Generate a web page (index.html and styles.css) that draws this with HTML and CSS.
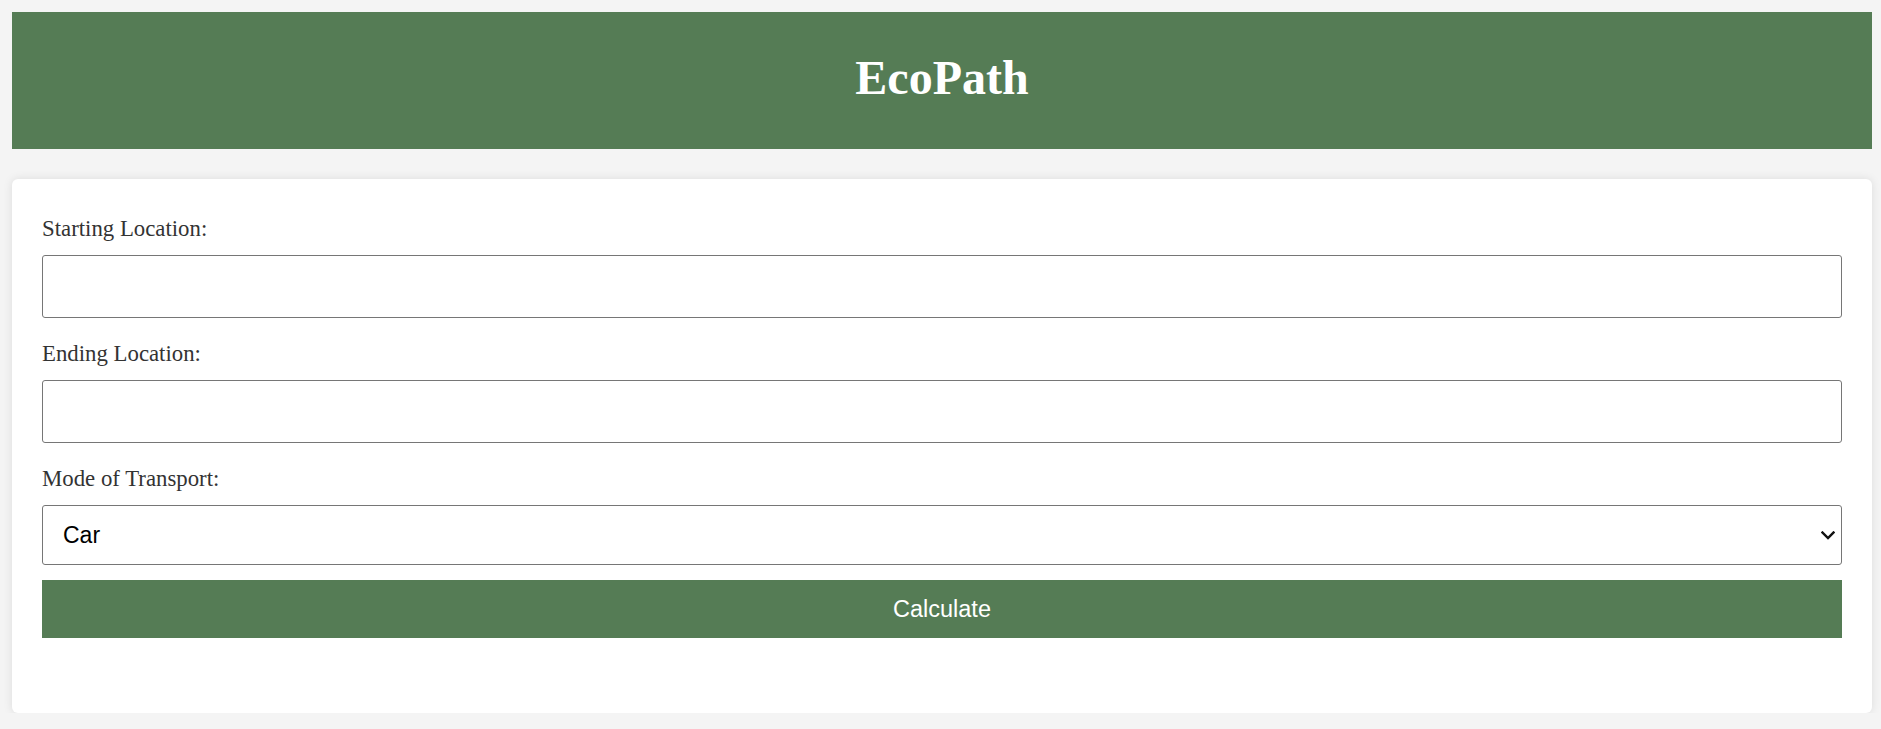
FILE: index.html
```html
<!DOCTYPE html>
<html lang="en">
<head>
<meta charset="utf-8">
<title>EcoPath</title>
<link rel="stylesheet" href="styles.css">
</head>
<body>
<header class="site-header">
  <h1 class="site-title">EcoPath</h1>
</header>
<main class="card">
  <form class="route-form">
    <label class="field-label" for="start">Starting Location:</label>
    <input class="field-input" id="start" type="text">
    <label class="field-label" for="end">Ending Location:</label>
    <input class="field-input" id="end" type="text">
    <label class="field-label" for="mode">Mode of Transport:</label>
    <div class="select-wrap">
      <select class="field-select" id="mode">
        <option>Car</option>
        <option>Bus</option>
        <option>Train</option>
        <option>Bicycle</option>
        <option>Walking</option>
      </select>
      <svg class="select-arrow" width="14" height="9" viewBox="0 0 14 9" aria-hidden="true">
        <path d="M1.5 1.5 L7 7 L12.5 1.5" fill="none" stroke="#111" stroke-width="2.4" stroke-linecap="square"/>
      </svg>
    </div>
    <button class="calc-button" type="button">Calculate</button>
  </form>
  <div class="result"></div>
</main>
</body>
</html>
```

FILE: styles.css
```css
* {
  box-sizing: border-box;
}

html, body {
  margin: 0;
  padding: 0;
}

body {
  background: #f4f4f4;
  padding: 12px 9px 0 12px;
  font-family: "Liberation Serif", "Times New Roman", serif;
  color: #333;
}

.site-header {
  background: #557c55;
  padding: 39px 0 45px;
  text-align: center;
}

.site-title {
  margin: 0;
  color: #fff;
  font-size: 48px;
  line-height: 53px;
  font-weight: bold;
}

.card {
  margin-top: 30px;
  background: #fff;
  border-radius: 6px;
  box-shadow: 0 0 10px rgba(0, 0, 0, 0.1);
  padding: 37px 30px 30px;
}

.route-form {
  display: flex;
  flex-direction: column;
}

.field-label {
  display: block;
  font-size: 22.8px;
  line-height: 26px;
  color: #333;
  margin-bottom: 13px;
}

.field-input {
  display: block;
  width: 100%;
  height: 63px;
  border: 1px solid #767676;
  border-radius: 3px;
  margin: 0 0 23px;
  padding: 0 20px;
  font-family: "Liberation Sans", Arial, sans-serif;
  font-size: 23px;
  background: #fff;
}

.select-wrap {
  position: relative;
  margin-bottom: 15px;
}

.field-select {
  display: block;
  width: 100%;
  height: 60px;
  border: 1px solid #767676;
  border-radius: 3px;
  padding: 0 20px;
  font-family: "Liberation Sans", Arial, sans-serif;
  font-size: 23px;
  color: #000;
  background: #fff;
  -webkit-appearance: none;
  appearance: none;
  margin: 0;
}

.select-arrow {
  position: absolute;
  right: 7px;
  top: 26px;
  pointer-events: none;
}

.calc-button {
  display: block;
  width: 100%;
  height: 58px;
  border: none;
  background: #557c55;
  color: #fff;
  font-family: "Liberation Sans", Arial, sans-serif;
  font-size: 23.5px;
  cursor: pointer;
  margin: 0;
}

.result {
  height: 45px;
}
```
